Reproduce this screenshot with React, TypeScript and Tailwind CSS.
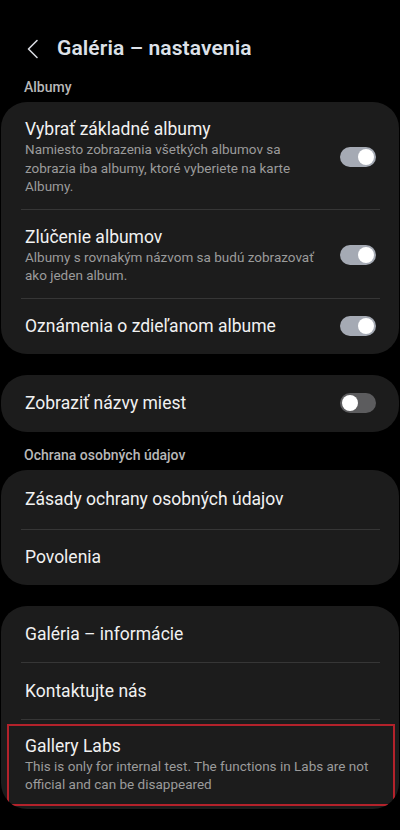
import React from 'react';

const font = { fontFamily: 'Roboto, "Noto Sans", sans-serif' };

const Toggle: React.FC<{ on?: boolean }> = ({ on }) => (
  <div
    className={`relative w-[36px] h-[20px] rounded-full shrink-0 ${on ? 'bg-[#a5aab4]' : 'bg-[#5c5c5e]'}`}
  >
    <div
      className={`absolute top-[2px] w-[16px] h-[16px] rounded-full bg-white ${on ? 'right-[2px]' : 'left-[2px]'}`}
    />
  </div>
);

const Divider = () => <div className="ml-[20px] mr-[19px] h-px bg-[#363636]" />;

interface RowProps {
  title: string;
  sub?: string;
  toggle?: 'on' | 'off';
  className?: string;
}

const Row: React.FC<RowProps> = ({ title, sub, toggle, className }) => (
  <div className={`flex items-center pl-[24px] pr-[23px] ${className ?? ''}`}>
    <div className={`flex-1 min-w-0 ${toggle ? 'pr-[18px]' : ''}`}>
      <div className="text-[17.5px] leading-[22px] text-[#f1f1f1]">{title}</div>
      {sub && <div className="text-[13.5px] leading-[18.5px] text-[#9b9b9b]">{sub}</div>}
    </div>
    {toggle && <Toggle on={toggle === 'on'} />}
  </div>
);

const Card: React.FC<{ children: React.ReactNode; className?: string }> = ({ children, className }) => (
  <div className={`mx-[1px] rounded-[26px] bg-[#1c1c1c] overflow-hidden ${className ?? ''}`}>{children}</div>
);

const Label: React.FC<{ text: string; className?: string }> = ({ text, className }) => (
  <div className={`px-[24px] text-[14px] leading-[18px] font-medium text-[#b8b8b8] ${className ?? ''}`}>{text}</div>
);

export default function App() {
  return (
    <div className="w-[400px] h-[830px] bg-black overflow-hidden" style={font}>
      <div className="flex items-center h-[28px] mt-[35px]">
        <svg className="ml-[26px] w-[13px] h-[20px]" viewBox="0 0 13 20" fill="none">
          <path d="M11 1.5 L2.5 10 L11 18.5" stroke="#d6d9df" strokeWidth="1.6" strokeLinecap="round" strokeLinejoin="round" />
        </svg>
        <div className="ml-[18px] text-[21px] font-semibold text-[#dde1e8] tracking-[0.1px]">Galéria – nastavenia</div>
      </div>

      <Label text="Albumy" className="mt-[15px]" />

      <Card className="mt-[6px]">
        <Row
          className="pt-[16px] pb-[13px]"
          title="Vybrať základné albumy"
          sub="Namiesto zobrazenia všetkých albumov sa zobrazia iba albumy, ktoré vyberiete na karte Albumy."
          toggle="on"
        />
        <Divider />
        <Row
          className="pt-[16px] pb-[13px]"
          title="Zlúčenie albumov"
          sub="Albumy s rovnakým názvom sa budú zobrazovať ako jeden album."
          toggle="on"
        />
        <Divider />
        <Row className="h-[55px]" title="Oznámenia o zdieľanom albume" toggle="on" />
      </Card>

      <Card className="mt-[21px]">
        <Row className="h-[57px]" title="Zobraziť názvy miest" toggle="off" />
      </Card>

      <Label text="Ochrana osobných údajov" className="mt-[14px]" />

      <Card className="mt-[6px]">
        <Row className="h-[59px]" title="Zásady ochrany osobných údajov" />
        <Divider />
        <Row className="h-[55px]" title="Povolenia" />
      </Card>

      <Card className="mt-[21px]">
        <Row className="h-[56px]" title="Galéria – informácie" />
        <Divider />
        <Row className="h-[56px]" title="Kontaktujte nás" />
        <Divider />
        <div className="relative">
          <Row
            className="pt-[15px] pb-[15px]"
            title="Gallery Labs"
            sub="This is only for internal test. The functions in Labs are not official and can be disappeared"
          />
          <div className="absolute top-[4px] bottom-[3px] left-[6px] right-[4px] border-2 border-[#b3222b]" />
        </div>
      </Card>
    </div>
  );
}
